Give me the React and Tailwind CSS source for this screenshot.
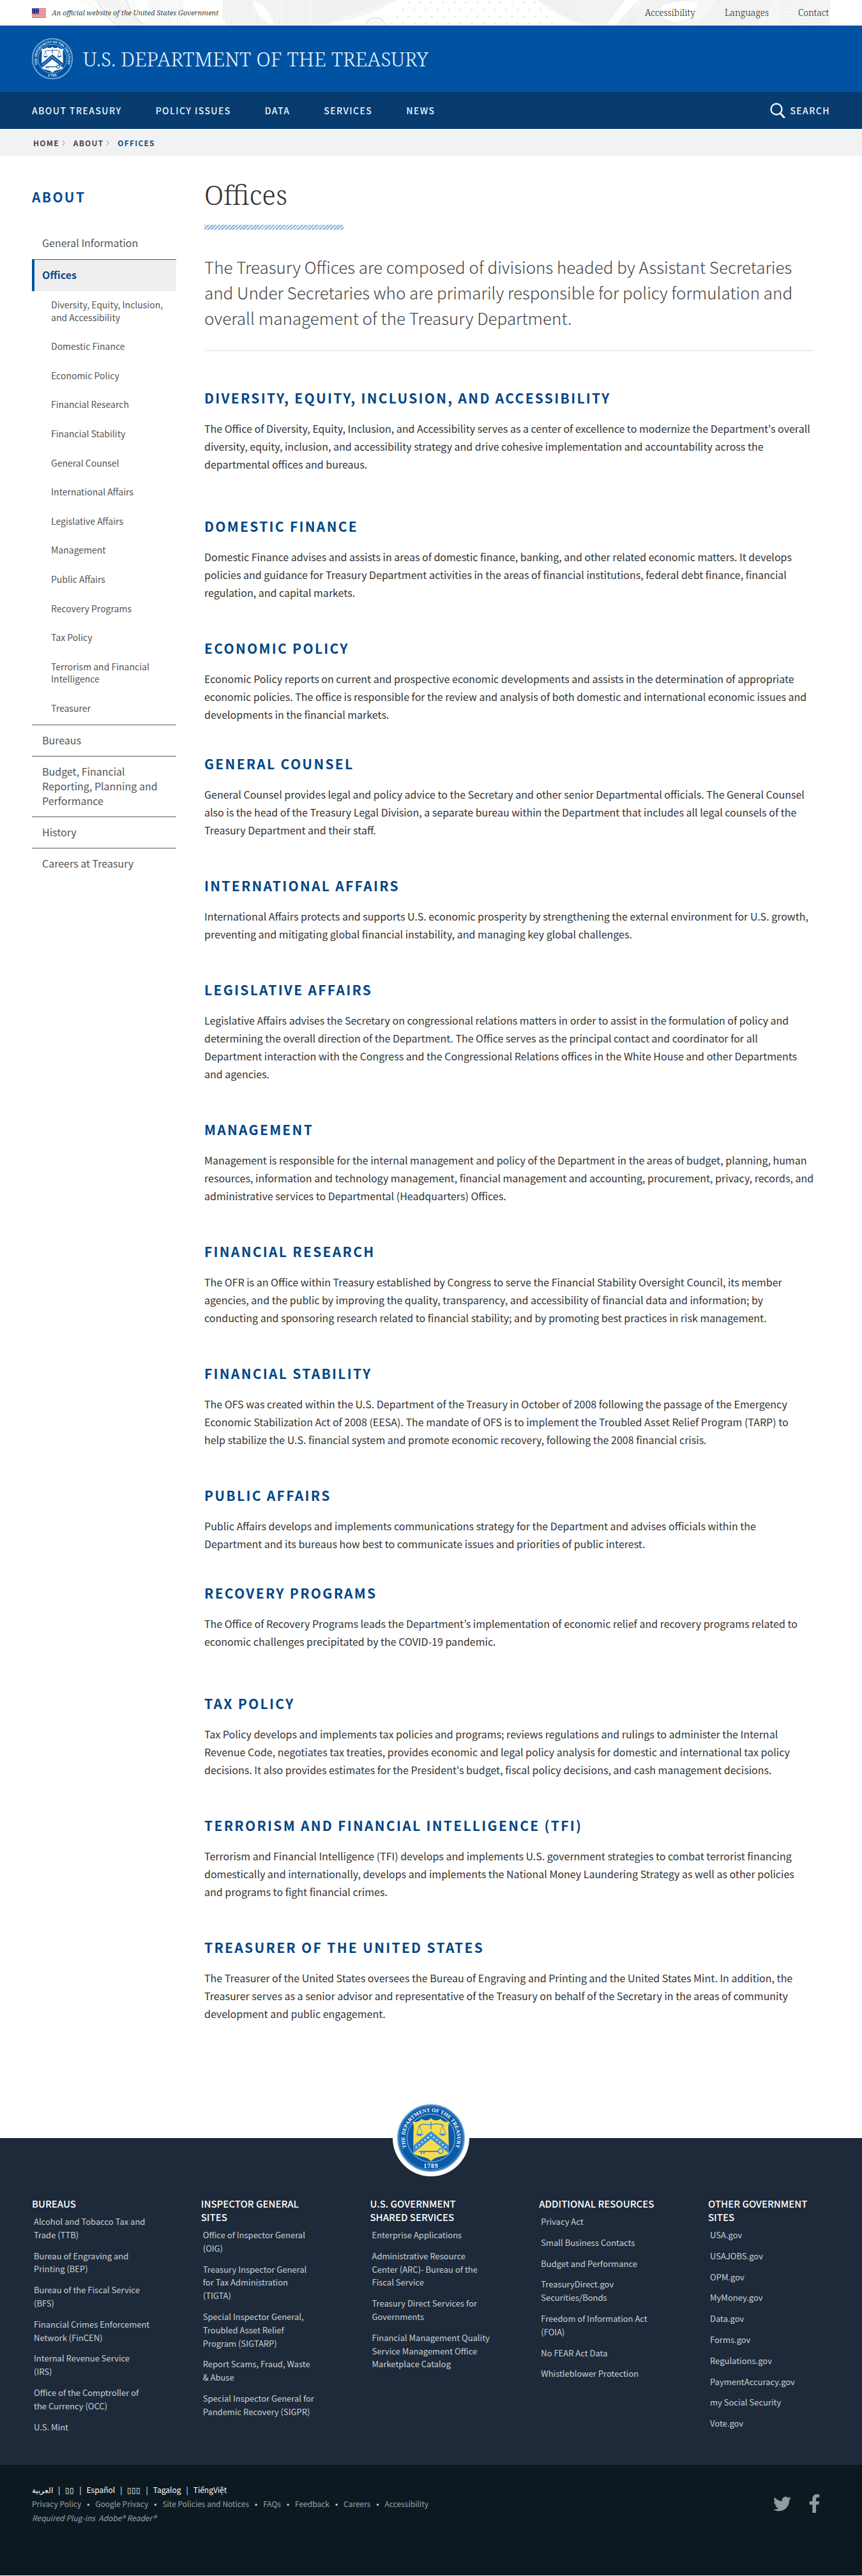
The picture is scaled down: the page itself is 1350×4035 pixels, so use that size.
import React from "react";
import { FaTwitter, FaFacebookF } from "react-icons/fa";

const SECTIONS = [
  { title: "Diversity, Equity, Inclusion, and Accessibility", gap: "mb-[69px]", text: "The Office of Diversity, Equity, Inclusion, and Accessibility serves as a center of excellence to modernize the Department's overall diversity, equity, inclusion, and accessibility strategy and drive cohesive implementation and accountability across the departmental offices and bureaus." },
  { title: "Domestic Finance", gap: "mb-[59px]", text: "Domestic Finance advises and assists in areas of domestic finance, banking, and other related economic matters. It develops policies and guidance for Treasury Department activities in the areas of financial institutions, federal debt finance, financial regulation, and capital markets." },
  { title: "Economic Policy", gap: "mb-[49px]", text: "Economic Policy reports on current and prospective economic developments and assists in the determination of appropriate economic policies. The office is responsible for the review and analysis of both domestic and international economic issues and developments in the financial markets." },
  { title: "General Counsel", gap: "mb-[59px]", text: "General Counsel provides legal and policy advice to the Secretary and other senior Departmental officials. The General Counsel also is the head of the Treasury Legal Division, a separate bureau within the Department that includes all legal counsels of the Treasury Department and their staff." },
  { title: "International Affairs", gap: "mb-[59px]", text: "International Affairs protects and supports U.S. economic prosperity by strengthening the external environment for U.S. growth, preventing and mitigating global financial instability, and managing key global challenges." },
  { title: "Legislative Affairs", gap: "mb-[59px]", text: "Legislative Affairs advises the Secretary on congressional relations matters in order to assist in the formulation of policy and determining the overall direction of the Department. The Office serves as the principal contact and coordinator for all Department interaction with the Congress and the Congressional Relations offices in the White House and other Departments and agencies." },
  { title: "Management", gap: "mb-[59px]", text: "Management is responsible for the internal management and policy of the Department in the areas of budget, planning, human resources, information and technology management, financial management and accounting, procurement, privacy, records, and administrative services to Departmental (Headquarters) Offices." },
  { title: "Financial Research", gap: "mb-[59px]", text: "The OFR is an Office within Treasury established by Congress to serve the Financial Stability Oversight Council, its member agencies, and the public by improving the quality, transparency, and accessibility of financial data and information; by conducting and sponsoring research related to financial stability; and by promoting best practices in risk management." },
  { title: "Financial Stability", gap: "mb-[59px]", text: "The OFS was created within the U.S. Department of the Treasury in October of 2008 following the passage of the Emergency Economic Stabilization Act of 2008 (EESA). The mandate of OFS is to implement the Troubled Asset Relief Program (TARP) to\nhelp stabilize the U.S. financial system and promote economic recovery, following the 2008 financial crisis." },
  { title: "Public Affairs", gap: "mb-[49px]", text: "Public Affairs develops and implements communications strategy for the Department and advises officials within the Department and its bureaus how best to communicate issues and priorities of public interest." },
  { title: "Recovery Programs", gap: "mb-[69px]", text: "The Office of Recovery Programs leads the Department’s implementation of economic relief and recovery programs related to economic challenges precipitated by the COVID-19 pandemic." },
  { title: "Tax Policy", gap: "mb-[59px]", text: "Tax Policy develops and implements tax policies and programs; reviews regulations and rulings to administer the Internal Revenue Code, negotiates tax treaties, provides economic and legal policy analysis for domestic and international tax policy decisions. It also provides estimates for the President's budget, fiscal policy decisions, and cash management decisions." },
  { title: "Terrorism and Financial Intelligence (TFI)", gap: "mb-[59px]", text: "Terrorism and Financial Intelligence (TFI) develops and implements U.S. government strategies to combat terrorist financing domestically and internationally, develops and implements the National Money Laundering Strategy as well as other policies and programs to fight financial crimes." },
  { title: "Treasurer of the United States", gap: "mb-0", text: "The Treasurer of the United States oversees the Bureau of Engraving and Printing and the United States Mint. In addition, the Treasurer serves as a senior advisor and representative of the Treasury on behalf of the Secretary in the areas of community development and public engagement." },
];

const OFFICES = [
  "Diversity, Equity, Inclusion, and Accessibility", "Domestic Finance", "Economic Policy", "Financial Research",
  "Financial Stability", "General Counsel", "International Affairs", "Legislative Affairs", "Management",
  "Public Affairs", "Recovery Programs", "Tax Policy", "Terrorism and Financial Intelligence", "Treasurer",
];

const SIDE_LINKS = ["Bureaus", "Budget, Financial Reporting, Planning and Performance", "History", "Careers at Treasury"];

const FOOTER = [
  ["Bureaus", ["Alcohol and Tobacco Tax and\nTrade (TTB)", "Bureau of Engraving and\nPrinting (BEP)", "Bureau of the Fiscal Service\n(BFS)", "Financial Crimes Enforcement\nNetwork (FinCEN)", "Internal Revenue Service\n(IRS)", "Office of the Comptroller of\nthe Currency (OCC)", "U.S. Mint"]],
  ["Inspector General\nSites", ["Office of Inspector General\n(OIG)", "Treasury Inspector General\nfor Tax Administration\n(TIGTA)", "Special Inspector General,\nTroubled Asset Relief\nProgram (SIGTARP)", "Report Scams, Fraud, Waste\n& Abuse", "Special Inspector General for\nPandemic Recovery (SIGPR)"]],
  ["U.S. Government\nShared Services", ["Enterprise Applications", "Administrative Resource\nCenter (ARC)- Bureau of the\nFiscal Service", "Treasury Direct Services for\nGovernments", "Financial Management Quality\nService Management Office\nMarketplace Catalog"]],
  ["Additional Resources", ["Privacy Act", "Small Business Contacts", "Budget and Performance", "TreasuryDirect.gov\nSecurities/Bonds", "Freedom of Information Act\n(FOIA)", "No FEAR Act Data", "Whistleblower Protection"]],
  ["Other Government\nSites", ["USA.gov", "USAJOBS.gov", "OPM.gov", "MyMoney.gov", "Data.gov", "Forms.gov", "Regulations.gov", "PaymentAccuracy.gov", "my Social Security", "Vote.gov"]],
];

const LANGUAGES = ["العربية", "▯▯", "Español", "▯▯▯", "Tagalog", "TiếngViệt"];
const POLICIES = ["Privacy Policy", "Google Privacy", "Site Policies and Notices", "FAQs", "Feedback", "Careers", "Accessibility"];

function Seal({ id, className, ring, edge, shield, charge, dots, detail }) {
  return (
    <svg viewBox="0 0 106 106" className={className} role="img" aria-label="Seal of the Department of the Treasury">
      <circle cx="53" cy="53" r="52" fill={ring} stroke={edge} strokeWidth="2" />
      <circle cx="53" cy="53" r="49.5" fill="none" stroke={detail} strokeWidth="0.6" opacity="0.7" />
      <circle cx="53" cy="53" r="37.5" fill="none" stroke={edge} strokeWidth="1.4" />
      <path id={id} d="M20 77.3A41 41 0 1 1 86 77.3" fill="none" />
      <text fontFamily="'Liberation Serif', serif" fontWeight="700" fontSize="8.4" fill="#fff" textAnchor="middle">
        <textPath href={`#${id}`} startOffset="50%">THE DEPARTMENT OF THE TREASURY</textPath>
      </text>
      <text x="53" y="100" fontFamily="'Liberation Serif', serif" fontWeight="700" fontSize="9.5" fill="#fff" textAnchor="middle" letterSpacing="1">1789</text>
      <path d="M53 21.500C50 26 44 26.500 38 23C35 27 29 29 24 27C27 34 25.500 40 25.500 48L25 77C33 83 46 81 53 89C60 81 73 83 81 77L80.500 48C80.500 40 79 34 82 27C77 29 71 27 68 23C62 26.500 56 26 53 21.500Z" fill={shield} />
      <path d="M53 42L81 65V77L53 54.500L25 77V65Z" fill={charge} />
      {[-23, -18.4, -13.8, -9.2, -4.6, 0, 4.6, 9.2, 13.8, 18.4, 23].map((d) => (
        <circle key={d} cx={53 + d} cy={48.5 + Math.abs(d) * 0.82} r="1.2" fill={dots} />
      ))}
      <g fill="none" stroke={charge} strokeWidth="1.6" strokeLinecap="round">
        <path d="M34 35C40 28 48 33 53 32C58 31 66 29 72 33M53 28V39" />
        <path d="M35 34L30.500 47H40L35 34M71 33L66.500 46.500H76L71 33" strokeWidth="0.9" />
        <path d="M35 74H64M38 74V77.500M42 74V77.500" strokeWidth="2" />
        <circle cx="68" cy="73.500" r="3.800" strokeWidth="1.800" />
      </g>
      <path d="M30 46.500H40.500C39.500 51 31 51 30 46.500ZM66 46H76.500C75.500 50.500 67 50.500 66 46Z" fill={charge} />
    </svg>
  );
}

function Flag() {
  return (
    <svg viewBox="0 0 22 15" className="h-[15px] w-[22px] shrink-0" aria-hidden="true">
      <rect width="22" height="15" fill="#f7e9e9" />
      {[0, 1, 2, 3, 4, 5, 6].map((i) => (
        <rect key={i} y={i * 2.3} width="22" height="1.2" fill="#dc4a50" />
      ))}
      <rect width="11" height="8.5" fill="#25307f" />
      {[0, 1, 2, 3, 4, 5, 6, 7, 8].map((i) => (
        <circle key={i} cx={2 + (i % 3) * 3.5} cy={1.6 + Math.floor(i / 3) * 2.6} r="0.5" fill="#fff" />
      ))}
    </svg>
  );
}

/* Banknote-style engraving that runs behind the top bar. */
function Engraving() {
  const steps = (n) => Array.from({ length: n }, (_, i) => i);
  return (
    <svg viewBox="0 0 1350 40" preserveAspectRatio="xMidYMid slice" className="absolute inset-0 h-full w-full" aria-hidden="true">
      <path d="M350 0H622Q560 36 488 40H350ZM842 0H1300V40H926Q880 34 842 0Z" fill="#f6f6f6" />
      <g fill="none" stroke="#e6e6e6" strokeWidth="1">
        {steps(12).map((i) => <path key={i} d={`M${120 + i * 6} ${i * 4 - 4}Q180 ${10 + i * 3} 215 ${i * 5 - 10}`} opacity="0.6" />)}
        {steps(12).map((i) => <path key={i} d={`M${156 + i * 3} -2Q${172 + i * 3} 26 ${192 + i * 3} 42`} />)}
        {steps(16).map((i) => <path key={i} d={`M${228 + i * 4} -2Q${246 + i * 3} 22 ${222 + i * 5} 42`} />)}
        {steps(34).map((i) => <path key={i} d={`M${350 + i * 4} 0V40`} />)}
        {steps(13).map((i) => <path key={i} d={`M488 ${i * 3}H${618 - i * 9}`} />)}
        {steps(13).map((i) => <path key={i} d={`M${844 + i * 5} ${i * 3}H906`} />)}
        {steps(22).map((i) => <path key={i} d={`M${908 + i * 4} 0V40`} />)}
        {steps(18).map((i) => <path key={i} d={`M${1010 + i * 4} -2Q${1000 + i * 4} 22 ${970 + i * 5} 42`} />)}
        {steps(22).map((i) => <path key={i} d={`M${1125 + i * 4} -2Q${1110 + i * 4} 24 ${1090 + i * 4} 42`} />)}
        {steps(9).map((i) => <path key={i} d={`M1222 ${i * 5 - 6}L1300 ${i * 5 + 8}`} opacity="0.6" />)}
      </g>
      <g fill="none" stroke="#ebebeb" strokeWidth="3">
        <path d="M152 -2Q166 30 188 42M196 -2Q208 30 230 42" />
        <circle cx="588" cy="44" r="16" />
        <circle cx="588" cy="44" r="10" strokeWidth="1.500" />
      </g>
      <g fill="#fff">
        <path d="M288 0Q306 6 314 40H300Q284 20 288 0ZM396 0Q424 10 428 40Q400 28 396 0ZM980 0H1000L962 40H948ZM1036 8Q1090 -6 1092 10Q1094 28 1056 34Q1030 30 1036 8Z" />
        <path d="M340 0Q342 24 356 40H344Q334 20 334 0Z" />
      </g>
      <g fill="#e6e6e6">
        {steps(4).map((r) => steps(16).map((c) => {
          const x = 604 + c * 18 + (r % 2) * 9;
          const inside = x > 630 - r * 10 && x < 840 + r * 10;
          return inside ? <circle key={`${r}-${c}`} cx={x} cy={4 + r * 11} r="1.600" /> : null;
        }))}
      </g>
    </svg>
  );
}

function SearchIcon() {
  return (
    <svg viewBox="0 0 24 24" className="size-6" fill="none" stroke="currentColor" aria-hidden="true">
      <circle cx="10" cy="10" r="8.500" strokeWidth="2.400" />
      <path d="M16 16.500L22 23" strokeWidth="3" strokeLinecap="round" />
    </svg>
  );
}

function Chevron() {
  return (
    <svg viewBox="0 0 5 10" className="mr-[13px] ml-1 h-[10px] w-[5px]" fill="none" stroke="#bbb" strokeWidth="1.500" aria-hidden="true">
      <path d="M1 1L4 5L1 9" />
    </svg>
  );
}

const SERIF = "font-['Noto_Serif','Liberation_Serif',serif]";

export default function App() {
  return (
    <div className="min-h-screen bg-white font-['Noto_Sans_CJK_JP','Noto_Sans',sans-serif] text-[#333]">
      <header>
        <div className={`relative h-10 overflow-hidden bg-white ${SERIF}`}>
          <Engraving />
          <div className="relative flex h-full items-center justify-between pr-[52px] pl-[50px]">
            <p className="flex items-center gap-[9px] text-[11px] text-[#444] italic"><Flag />An official website of the United States Government</p>
            <nav aria-label="Utility" className="flex gap-[46px] text-sm font-light text-[#222]">
              <a href="#accessibility">Accessibility</a>
              <a href="#languages">Languages</a>
              <a href="#contact">Contact</a>
            </nav>
          </div>
        </div>
        <div className="flex h-[104px] items-center bg-[#0053a3] px-[50px]">
          <a href="#home" className={`flex items-center gap-4 text-[31px] leading-10 font-light text-[#e8f6ff] ${SERIF}`}>
            <Seal id="seal-top" className="size-16" ring="#0053a3" edge="#9cc6ea" shield="#fff" charge="#0b5aa6" dots="#fff" detail="#9cc6ea" />
            U.S. DEPARTMENT OF THE TREASURY
          </a>
        </div>
        <div className="flex h-[58px] items-center justify-between bg-[#083b6e] px-[50px] text-sm font-medium tracking-widest text-[#e8f6ff] uppercase">
          <nav aria-label="Main" className="flex gap-[53px]">
            {["About Treasury", "Policy Issues", "Data", "Services", "News"].map((t) => <a key={t} href="#nav">{t}</a>)}
          </nav>
          <button type="button" className="flex items-center gap-[7px] font-medium tracking-widest uppercase"><SearchIcon />Search</button>
        </div>
        <nav aria-label="Breadcrumb" className="mt-[2px] flex h-10 items-center bg-[#f2f2f2] px-[52px] text-[12px] font-bold tracking-widest text-[#444] uppercase">
          <a href="#home">Home</a>
          <Chevron />
          <a href="#about">About</a>
          <Chevron />
          <span className="text-[#0f4a8a]">Offices</span>
        </nav>
      </header>

      <div className="flex gap-11 pr-[75px] pl-[50px]">
        <aside className="w-[226px] shrink-0 pt-[50px]">
          <h2 className="mb-[35px] text-[21px] leading-7 font-bold tracking-[0.11em] text-[#004b93] uppercase">About</h2>
          <ul className="text-base leading-[23px] text-[#555]">
            <li className="pt-3 pr-5 pb-[14px] pl-4"><a href="#general">General Information</a></li>
            <li>
              <a href="#offices" aria-current="page" className="block h-[50px] border-t border-l-4 border-t-[#555] border-l-[#0052a0] bg-[#eee] pt-[12px] pl-3 font-bold text-[#0f4a8a]">Offices</a>
              <ul className="flex flex-col gap-[26px] pt-3 pb-[15px] pl-[30px] text-sm leading-[1.4]">
                {OFFICES.map((t) => <li key={t}><a href="#office">{t}</a></li>)}
              </ul>
            </li>
            {SIDE_LINKS.map((t) => (
              <li key={t} className="border-t border-[#555] pt-3 pr-5 pb-[13px] pl-4"><a href="#section">{t}</a></li>
            ))}
          </ul>
        </aside>

        <main className="min-w-0 flex-1 pt-8 pb-[181px]">
          <h1 className={`text-[42px] leading-[58px] font-light text-[#333] ${SERIF}`}>Offices</h1>
          <div className="mt-[18px] h-2 w-[218px] bg-[repeating-linear-gradient(135deg,#8fb8e0_0px,#8fb8e0_2px,#e6f1fb_2px,#e6f1fb_4px)]" />
          <p className="mt-[38px] border-b-2 border-[#eee] pb-[30px] text-[26px] leading-10 font-light text-[#444]">
            The Treasury Offices are composed of divisions headed by Assistant Secretaries and Under Secretaries who are primarily responsible for policy formulation and overall management of the Treasury Department.
          </p>
          <div className="pt-[59px]">
            {SECTIONS.map((s) => (
              <section key={s.title} className={s.gap}>
                <h2 className="mb-5 text-[21px] leading-7 font-bold tracking-[0.11em] text-[#004585] uppercase">{s.title}</h2>
                <p className="text-base leading-7 whitespace-pre-line">{s.text}</p>
              </section>
            ))}
          </div>
        </main>
      </div>

      <footer className="bg-[#1e2a3a] text-[#c9d1d6]">
        <div className="flex justify-center">
          <div className="-mt-[60px] rounded-full bg-white p-[7px]">
            <Seal id="seal-bottom" className="size-[106px]" ring="#0b5aa6" edge="#6ea6dc" shield="#f6dc4e" charge="#3d8fd0" dots="#fff" detail="#a9cdf0" />
          </div>
        </div>
        <div className="flex justify-between pt-8 pr-[45px] pb-[49px] pl-[50px]">
          {FOOTER.map(([title, links]) => (
            <section key={title} className="w-[196px]">
              <h3 className="mb-2 text-[15px] leading-[21px] font-medium whitespace-pre-line text-white uppercase">{title}</h3>
              <ul className="flex flex-col gap-3 pl-[3px] text-[13px] leading-[1.6] whitespace-pre-line">
                {links.map((l) => <li key={l}><a href="#link">{l}</a></li>)}
              </ul>
            </section>
          ))}
        </div>
        <div className="flex min-h-[173px] items-start justify-between bg-[#0d1921] pr-[60px] pl-[50px]">
          <div className="pt-7 text-xs leading-[22px] text-[#9aa3a8]">
            <div className="flex text-white">
              {LANGUAGES.map((l, i) => (
                <React.Fragment key={l}>
                  {i > 0 && <span className="mx-2">|</span>}
                  <a href="#language">{l}</a>
                </React.Fragment>
              ))}
            </div>
            <div className="flex">
              {POLICIES.map((p, i) => (
                <React.Fragment key={p}>
                  {i > 0 && <span className="mx-[9px] text-[#c9d1d6]">•</span>}
                  <a href="#policy">{p}</a>
                </React.Fragment>
              ))}
            </div>
            <p className="italic">Required Plug-ins &nbsp;<a href="#reader">Adobe® Reader®</a></p>
          </div>
          <div className="flex items-center gap-[22px] pt-[46px] text-[#929a9f]">
            <a href="#twitter" aria-label="Twitter"><FaTwitter size={28} /></a>
            <a href="#facebook" aria-label="Facebook"><FaFacebookF size={29} /></a>
          </div>
        </div>
      </footer>
    </div>
  );
}
